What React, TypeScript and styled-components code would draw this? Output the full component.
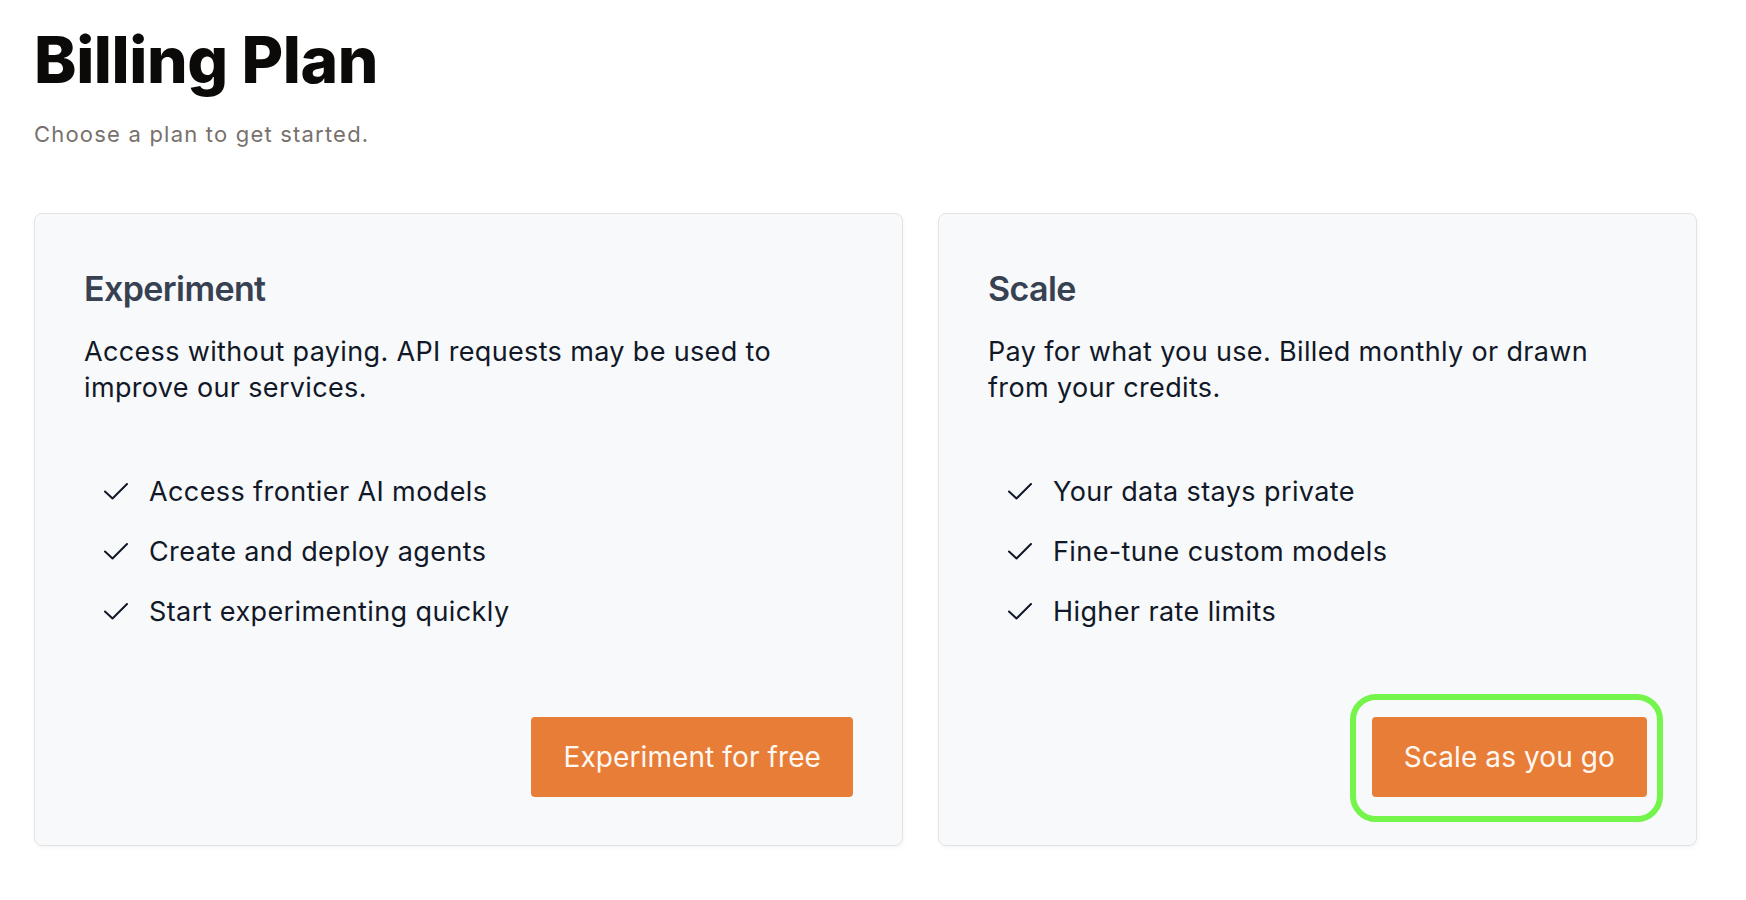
import styled, { createGlobalStyle } from "styled-components";

const GlobalStyle = createGlobalStyle`
  body {
    margin: 0;
    background: #ffffff;
    font-family: Inter, "Noto Sans", sans-serif;
  }
`;

const Page = styled.div`
  padding: 22px 49px 40px 34px;
`;

const Title = styled.h1`
  margin: 0;
  font-size: 64px;
  line-height: 1.2;
  font-weight: 800;
  letter-spacing: -0.4px;
  color: #0c0a09;
`;

const Subtitle = styled.p`
  margin: 20px 0 0 0;
  font-size: 22px;
  line-height: 31px;
  letter-spacing: 1.2px;
  color: #78716c;
`;

const Plans = styled.div`
  display: grid;
  grid-template-columns: 869fr 759fr;
  gap: 35px;
  margin-top: 63px;
`;

const Card = styled.div`
  min-height: 633px;
  box-sizing: border-box;
  display: flex;
  flex-direction: column;
  padding: 55px 49px 48px 49px;
  background: #f8f9fb;
  border: 1px solid #e2e3e5;
  border-radius: 8px;
  box-shadow: 1px 2px 4px rgba(0, 0, 0, 0.04);
`;

const PlanName = styled.h2`
  margin: 0;
  font-size: 34px;
  line-height: 1.2;
  font-weight: 600;
  letter-spacing: -0.6px;
  color: #374151;
`;

const Description = styled.p`
  margin: 24px 0 0 0;
  font-size: 27px;
  line-height: 36.5px;
  letter-spacing: 0.35px;
  color: #111827;
`;

const Features = styled.ul`
  list-style: none;
  margin: 67px 0 0 0;
  padding: 0 0 0 20px;
  display: flex;
  flex-direction: column;
  gap: 24px;
`;

const Feature = styled.li`
  display: flex;
  align-items: center;
  gap: 21px;
  font-size: 27px;
  line-height: 36px;
  letter-spacing: 0.4px;
  color: #111827;
`;

const Action = styled.button<{ $focused?: boolean }>`
  position: relative;
  margin-top: auto;
  align-self: flex-end;
  height: 80px;
  padding: 0 32px;
  border: none;
  border-radius: 4px;
  background: #e87d37;
  color: #fff8f2;
  font-family: Inter, "Noto Sans", sans-serif;
  font-size: 28px;
  letter-spacing: 0.1px;
  cursor: pointer;

  &::after {
    content: "";
    display: ${(p) => (p.$focused ? "block" : "none")};
    position: absolute;
    top: -23px;
    right: -16px;
    bottom: -25px;
    left: -22px;
    border: 6px solid #75f54b;
    border-radius: 26px;
    pointer-events: none;
  }
`;

const Check = () => (
  <svg width="24" height="17" viewBox="0 0 24 17" fill="none">
    <path
      d="M1 8.5 L8.5 15.5 L23 1"
      stroke="#111827"
      strokeWidth="2"
      strokeLinecap="round"
      strokeLinejoin="round"
    />
  </svg>
);

const plans = [
  {
    name: "Experiment",
    description:
      "Access without paying. API requests may be used to improve our services.",
    features: [
      "Access frontier AI models",
      "Create and deploy agents",
      "Start experimenting quickly",
    ],
    action: "Experiment for free",
    focused: false,
  },
  {
    name: "Scale",
    description:
      "Pay for what you use. Billed monthly or drawn from your credits.",
    features: [
      "Your data stays private",
      "Fine-tune custom models",
      "Higher rate limits",
    ],
    action: "Scale as you go",
    focused: true,
  },
];

const App = () => {
  return (
    <Page>
      <GlobalStyle />
      <Title>Billing Plan</Title>
      <Subtitle>Choose a plan to get started.</Subtitle>
      <Plans>
        {plans.map((plan) => (
          <Card key={plan.name}>
            <PlanName>{plan.name}</PlanName>
            <Description>{plan.description}</Description>
            <Features>
              {plan.features.map((f) => (
                <Feature key={f}>
                  <Check />
                  {f}
                </Feature>
              ))}
            </Features>
            <Action $focused={plan.focused}>{plan.action}</Action>
          </Card>
        ))}
      </Plans>
    </Page>
  );
};

export default App;
